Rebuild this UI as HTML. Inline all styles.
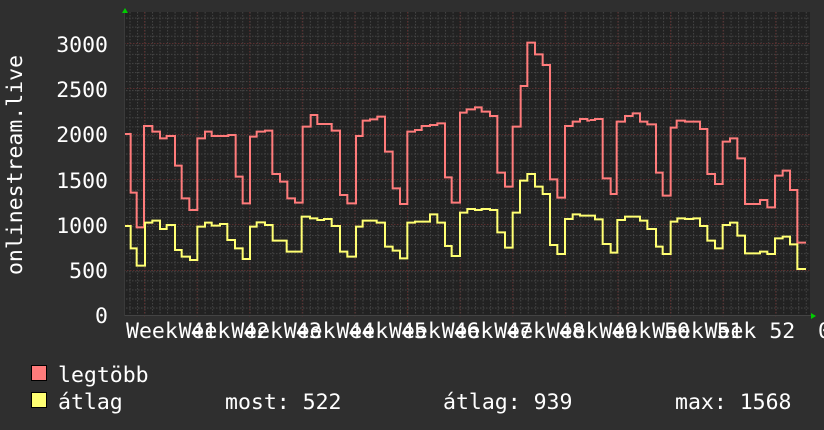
<!DOCTYPE html>
<html><head><meta charset="utf-8"><style>
html,body{margin:0;padding:0;background:#2f2f2f;}
svg{display:block;}
text{font-family:"DejaVu Sans Mono","Liberation Mono",monospace;font-size:21.5px;fill:#fff;}
</style></head><body>
<svg width="824" height="430" viewBox="0 0 824 430" xmlns="http://www.w3.org/2000/svg">
<defs>
<pattern id="hmin" x="0" y="0" width="3" height="9.06" patternUnits="userSpaceOnUse" patternTransform="translate(0,-0.5)">
<rect x="0" y="0" width="1.5" height="1" fill="#444"/></pattern>
<pattern id="vmin" x="0" y="0" width="7.514" height="3" patternUnits="userSpaceOnUse" patternTransform="translate(129.5,0)">
<rect x="0" y="0" width="1" height="1.5" fill="#444"/></pattern>
</defs>
<rect x="0" y="0" width="824" height="430" fill="#2f2f2f"/>
<rect x="124" y="12" width="686" height="303" fill="#222"/>
<rect x="124" y="12" width="686" height="303" fill="url(#vmin)"/>
<rect x="124" y="12" width="686" height="303" fill="url(#hmin)"/>
<g stroke="#5a2f2f" stroke-width="1" stroke-dasharray="1.5,1.5">
<line x1="124" y1="270.5" x2="810" y2="270.5"/><line x1="124" y1="224.5" x2="810" y2="224.5"/>
<line x1="124" y1="179.5" x2="810" y2="179.5"/><line x1="124" y1="134.5" x2="810" y2="134.5"/>
<line x1="124" y1="88.5" x2="810" y2="88.5"/><line x1="124" y1="43.5" x2="810" y2="43.5"/>
<line x1="144.5" y1="12" x2="144.5" y2="318"/><line x1="197.1" y1="12" x2="197.1" y2="318"/>
<line x1="249.7" y1="12" x2="249.7" y2="318"/><line x1="302.3" y1="12" x2="302.3" y2="318"/>
<line x1="354.9" y1="12" x2="354.9" y2="318"/><line x1="407.5" y1="12" x2="407.5" y2="318"/>
<line x1="460.1" y1="12" x2="460.1" y2="318"/><line x1="512.7" y1="12" x2="512.7" y2="318"/>
<line x1="565.3" y1="12" x2="565.3" y2="318"/><line x1="617.9" y1="12" x2="617.9" y2="318"/>
<line x1="670.5" y1="12" x2="670.5" y2="318"/><line x1="723.1" y1="12" x2="723.1" y2="318"/>
<line x1="775.7" y1="12" x2="775.7" y2="318"/>
</g>
<line x1="124" y1="315.5" x2="812" y2="315.5" stroke="#444" stroke-width="1"/>
<line x1="124.5" y1="10" x2="124.5" y2="316" stroke="#3a3a3a" stroke-width="1"/>
<polygon points="122,13 125,8 128,13" fill="#0c0"/>
<polygon points="811,313 816,316 811,319" fill="#0c0"/>
<g fill="none" stroke-width="6" stroke-linejoin="miter">
<g transform="translate(120,30) scale(0.33333)">
<path stroke="#ff7b7b" d="M15,312 H32 V488 H50 V592 H72 V288 H97 V305 H120 V325 H140 V318 H165 V407 H185 V505 H208 V540 H232 V325 H255 V305 H275 V318 H325 V315 H347 V440 H368 V520 H390 V320 H410 V305 H435 V302 H457 V432 H480 V455 H502 V505 H525 V518 H548 V290 H572 V255 H592 V282 H635 V302 H660 V495 H682 V520 H708 V318 H720"/>
<path stroke="#ffff72" d="M15,588 H32 V655 H50 V707 H75 V578 H97 V572 H120 V597 H140 V585 H165 V660 H185 V680 H210 V690 H232 V590 H255 V578 H275 V587 H300 V582 H322 V630 H345 V655 H368 V687 H390 V590 H410 V577 H435 V585 H458 V632 H500 V665 H545 V560 H570 V565 H592 V570 H612 V567 H635 V588 H660 V665 H682 V680 H708 V590 H720"/>
</g>
<g transform="translate(350,30) scale(0.33333)">
<path stroke="#ff7b7b" d="M30,318 H38 V272 H60 V268 H82 V260 H105 V365 H128 V475 H150 V522 H172 V305 H195 V300 H215 V288 H240 V285 H262 V280 H285 V442 H305 V518 H330 V248 H350 V238 H375 V232 H395 V245 H420 V258 H442 V428 H465 V470 H488 V290 H512 V168 H532 V38 H555 V73 H578 V105 H600 V448 H622 V503 H645 V288 H668 V275 H690 V267 H712 V272 H720"/>
<path stroke="#ffff72" d="M30,590 H38 V572 H80 V578 H105 V650 H128 V662 H150 V685 H172 V578 H195 V575 H240 V553 H262 V578 H285 V648 H305 V678 H330 V548 H352 V537 H375 V540 H395 V537 H420 V540 H442 V607 H465 V653 H488 V548 H510 V452 H532 V432 H555 V470 H578 V492 H600 V645 H622 V672 H645 V567 H668 V553 H690 V557 H720"/>
</g>
<g transform="translate(580,30) scale(0.33333)">
<path stroke="#ff7b7b" d="M30,270 H45 V267 H68 V445 H92 V492 H110 V275 H135 V258 H158 V250 H180 V275 H202 V283 H228 V428 H248 V497 H272 V293 H290 V272 H315 V275 H360 V297 H382 V432 H405 V462 H428 V335 H450 V325 H472 V385 H495 V522 H540 V510 H562 V532 H585 V437 H608 V422 H630 V480 H652 V638 H678"/>
<path stroke="#ffff72" d="M30,557 H45 V568 H68 V642 H92 V668 H112 V570 H135 V560 H180 V572 H202 V597 H228 V650 H248 V672 H272 V575 H292 V565 H315 V567 H340 V565 H360 V588 H382 V632 H405 V655 H428 V585 H450 V578 H472 V617 H495 V670 H540 V665 H562 V672 H585 V625 H608 V620 H630 V643 H652 V717 H678"/>
</g>
</g>
<g text-anchor="end">
<text x="108" y="52">3000</text><text x="108" y="97">2500</text><text x="108" y="142">2000</text>
<text x="108" y="188">1500</text><text x="108" y="233">1000</text><text x="108" y="278">500</text>
<text x="108" y="323">0</text>
</g>
<text transform="translate(22,165) rotate(-90)" text-anchor="middle">onlinestream.live</text>
<g xml:space="preserve">
<text x="126" y="338">Week 41</text><text x="178.6" y="338">Week 42</text><text x="231.2" y="338">Week 43</text>
<text x="283.8" y="338">Week 44</text><text x="336.4" y="338">Week 45</text><text x="389" y="338">Week 46</text>
<text x="441.6" y="338">Week 47</text><text x="494.2" y="338">Week 48</text><text x="546.8" y="338">Week 49</text>
<text x="599.4" y="338">Week 50</text><text x="652" y="338">Week 51</text><text x="704.6" y="338">Week 52</text>
<text x="818" y="338">0</text>
</g>
<rect x="31.5" y="365.5" width="15" height="15" fill="#ff7b7b" stroke="#000"/>
<rect x="31.5" y="392.5" width="15" height="15" fill="#ffff72" stroke="#000"/>
<text x="58" y="382">legtöbb</text>
<text x="58" y="409">átlag</text>
<text x="225" y="409">most: 522</text>
<text x="443" y="409">átlag: 939</text>
<text x="675" y="409">max: 1568</text>
</svg>
</body></html>
